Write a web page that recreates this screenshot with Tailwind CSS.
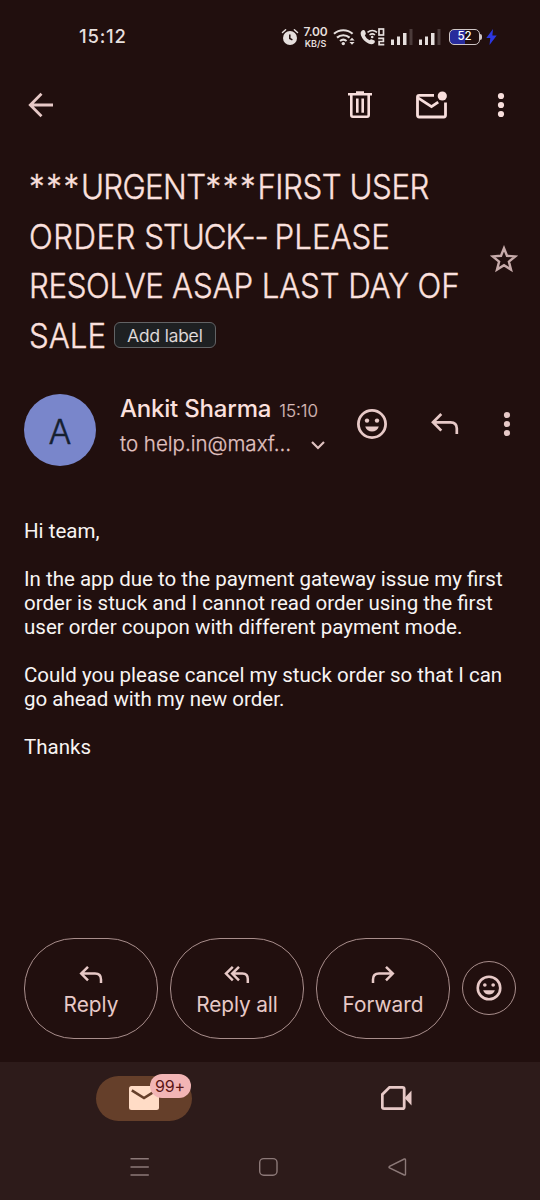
<!DOCTYPE html>
<html lang="en">
<head>
<meta charset="utf-8">
<title>Mail</title>
<script src="https://cdn.jsdelivr.net/npm/@tailwindcss/browser@4"></script>
</head>
<body class="bg-[#210f0e]">
<div class="flex h-[1200px] w-[540px] flex-col overflow-hidden bg-[#210f0e] font-['Inter',sans-serif] text-[#e7c9c7]">

  <!-- Status bar -->
  <header class="flex h-[72px] items-center pt-px pl-[79px] text-[#e6dfdd]">
    <span class="w-[202px] text-[18.5px] font-medium tracking-[0.8px]">15:12</span>
    <svg class="h-[18px] w-[18px]" viewBox="0 0 18 18" fill="none" stroke="currentColor"><circle cx="9" cy="10" r="7" fill="currentColor" stroke="none"/><path d="M1.5 4.5 4.6 1.8M16.5 4.5 13.4 1.8" stroke-width="1.5" stroke-linecap="round"/><path d="M8.8 6.5v4l2.6 1.4" stroke="#210f0e" stroke-width="1.5"/></svg>
    <div class="ml-[4px] flex h-[22px] w-[25px] flex-col items-center justify-between font-semibold">
      <span class="text-[12px] leading-[12px] tracking-[-0.2px]">7.00</span>
      <span class="text-[9px] leading-[9px]">KB/S</span>
    </div>
    <svg class="ml-[5px] h-[18px] w-[22px]" viewBox="0 0 22 18" fill="none" stroke="currentColor"><path d="M1 5.8a14 14 0 0 1 18.6 0M4 9.6a9.6 9.6 0 0 1 12.6 0M7 13a5.4 5.4 0 0 1 6.6 0" stroke-width="2.2"/><circle cx="10.3" cy="15.6" r="1.7" fill="currentColor" stroke="none"/><path d="M16.4 12.5 19 9.8l2.6 2.7zM16.4 14 19 16.7l2.6-2.7z" fill="currentColor" stroke="none"/></svg>
    <svg class="ml-[5px] h-[18px] w-[26px]" viewBox="0 0 26 18" fill="none" stroke="currentColor"><path d="M2 2.6C3 1.7 4.4 1.7 5 3l.8 2.3c.2.8-.2 1.3-1 2 1 2.3 2.4 3.8 4.9 5 .7-.9 1.3-1.2 2.100-.9l2.200.8c1.200.6 1.100 2 .1 3-1.300 1.300-3.300 1.500-5.600.3C5 13.700 2.300 10.800 1 7.400.3 5.300.7 3.700 2 2.600z" fill="currentColor" stroke="none"/><path d="M7.500 4.300a7.500 7.500 0 0 1 9.500 0M9.500 7a4.300 4.300 0 0 1 5.500 0" stroke-width="1.500"/><circle cx="12.200" cy="9" r="1.300" fill="currentColor" stroke="none"/><rect x="19" y="1" width="4.500" height="6" stroke-width="1.700"/><path d="M18.200 10.300h5.200v3.200h-4.300v3.200h5.200" stroke-width="1.700"/></svg>
    <svg class="ml-[5px] h-[16px] w-[22px]" viewBox="0 0 22 16" fill="currentColor"><rect x="0" y="10.500" width="3" height="5.500"/><rect x="6" y="7.500" width="3" height="8.500"/><rect x="12" y="4" width="3.500" height="12"/><rect x="18.500" y="0" width="3" height="16" fill="#4b3b3a"/></svg>
    <svg class="ml-[6px] h-[16px] w-[22px]" viewBox="0 0 22 16" fill="currentColor"><rect x="0" y="10.500" width="3" height="5.500"/><rect x="6" y="7.500" width="3" height="8.500"/><rect x="12" y="4" width="3.500" height="12"/><rect x="18.500" y="0" width="3" height="16" fill="#4b3b3a"/></svg>
    <div class="ml-[8px] flex h-[16px] w-[31px] items-center justify-center rounded-[5px] border border-[#cfc6c6] bg-linear-to-r from-[#272b9c] from-50% to-[#210f0e] to-50% text-[11.5px] leading-none font-medium text-white">52</div>
    <span class="h-[6px] w-[2px] rounded-r-sm bg-[#cfc6c6]"></span>
    <svg class="ml-[4px] h-[16px] w-[11px]" viewBox="0 0 11 16" fill="#2c37e0"><path d="M7 0 .3 9h4L3.500 16 10.700 6.500H6.400z"/></svg>
  </header>

  <!-- Toolbar -->
  <nav class="flex h-[66px] items-center pl-[28px] text-[#f8dedc]">
    <svg class="h-[26px] w-[26px] text-[#e7c9c7]" viewBox="0 0 26 26" fill="none" stroke="currentColor" stroke-width="2.800"><path d="M25 13H3M13.500 1.800 2.300 13l11.200 11.200"/></svg>
    <svg class="ml-[294px] h-[28px] w-[24px]" viewBox="0 0 24 28" fill="none" stroke="currentColor" stroke-width="2.600"><path d="M0 3.300h24M8 1.600h8"/><path d="M3.300 3.500v20.600q0 1.600 1.600 1.600h14.200q1.600 0 1.600-1.600V3.500M9.300 7.500v14.300M14.700 7.500v14.300"/></svg>
    <svg class="ml-[44px] h-[28px] w-[32px]" viewBox="0 0 32 28" fill="none" stroke="currentColor" stroke-width="2.800"><path d="M18 4.300H3.200Q1.500 4.300 1.500 6v18.300Q1.500 26 3.200 26h24.600q1.700 0 1.700-1.700V11.500"/><path d="m2 6.800 13.500 8.800 6.700-4.500"/><circle cx="26.300" cy="5" r="4.600" fill="currentColor" stroke="none"/></svg>
    <svg class="ml-[49px] h-[26px] w-[8px]" viewBox="0 0 8 26" fill="currentColor"><circle cx="4" cy="4" r="3.100"/><circle cx="4" cy="13" r="3.100"/><circle cx="4" cy="22" r="3.100"/></svg>
  </nav>

  <!-- Subject -->
  <section class="flex h-[242px] pt-[24px] pl-[29px]">
    <h1 class="w-[461px] text-[34px] leading-[49.5px] font-light whitespace-nowrap text-[#fbe0de] [-webkit-text-stroke:0.4px_#fbe0de]">
      <span class="block origin-left scale-x-[0.92]"><span class="tracking-[1.8px]">***</span><span class="tracking-[-0.7px]">URGENT</span><span class="tracking-[1.8px]">***</span><span class="tracking-[-0.5px]">FIRST USER</span></span>
      <span class="block origin-left scale-x-[0.92] [word-spacing:-1px]"><span class="tracking-[0.5px]">ORDER </span><span class="tracking-[-1.1px]">STUCK-- </span><span class="tracking-[0px]">PLEASE</span></span>
      <span class="block origin-left scale-x-[0.92] tracking-[-0.15px]"><span class="tracking-[-0.4px]">RESOLVE </span>ASAP LAST DAY OF</span>
      <span class="flex items-center"><span class="block w-[85px] origin-left scale-x-[0.92]">SALE</span><span class="flex h-[26px] w-[102px] items-center justify-center rounded-[6px] border-[1.5px] border-[#626365] bg-[#1e2022] text-[17.5px] leading-none tracking-[-0.1px] text-[#ebe3e2] [-webkit-text-stroke:0.2px_#ebe3e2]">Add label</span></span>
    </h1>
    <svg class="mt-[83px] h-[28px] w-[28px]" viewBox="0 0 28 28" fill="none" stroke="#c7abaa" stroke-width="2.400"><path d="m14 3.200 3 7.600 8.300.6-6.400 5.200 2.100 8L14 20.200l-7 4.400 2.100-8-6.400-5.200 8.300-.6z"/></svg>
  </section>

  <!-- Sender -->
  <section class="flex h-[139px] pt-[14px] pl-[24px]">
    <div class="flex h-[72px] w-[72px] items-center justify-center rounded-full bg-[#7986cb] pt-[3px] text-[34px] font-light text-[#152030] [-webkit-text-stroke:0.4px_#152030]">A</div>
    <div class="ml-[24px] w-[237px]">
      <div class="flex h-[30px] items-baseline text-[24px] leading-[30px]"><span class="font-medium tracking-[-0.2px] text-[#fbe0de]">Ankit Sharma</span><span class="ml-[8px] text-[17px] font-light text-[#d8bbb9] [-webkit-text-stroke:0.2px_#d8bbb9]">15:10</span></div>
      <div class="mt-[6px] flex h-[28px] items-center text-[20.5px] leading-[28px] font-light text-[#e0c2c0] [-webkit-text-stroke:0.25px_#e0c2c0]"><span class="w-[191px]">to help.in@maxf…</span><svg class="mt-[2px] h-[10px] w-[14px]" viewBox="0 0 14 10" fill="none" stroke="currentColor" stroke-width="2.200"><path d="m1 2 6 6 6-6"/></svg></div>
    </div>
    <svg class="mt-[15px] h-[30px] w-[30px]" viewBox="0 0 30 30" fill="currentColor"><circle cx="15" cy="15" r="13.600" fill="none" stroke="currentColor" stroke-width="2.800"/><circle cx="10" cy="11.600" r="2.200"/><circle cx="20" cy="11.600" r="2.200"/><path d="M8.200 17.500h13.600c-1 3.200-3.600 5-6.800 5s-5.800-1.800-6.800-5z"/></svg>
    <svg class="mt-[19px] ml-[44px] h-[24px] w-[28px]" viewBox="0 0 28 24" fill="none" stroke="currentColor" stroke-width="2.700"><path d="M10.300 1 2 9.300l8.300 8.300M2.500 9.300H19.500q6.300 0 6.300 6.300V21"/></svg>
    <svg class="mt-[17px] ml-[44px] h-[26px] w-[8px]" viewBox="0 0 8 26" fill="currentColor"><circle cx="4" cy="4" r="3.100"/><circle cx="4" cy="13" r="3.100"/><circle cx="4" cy="22" r="3.100"/></svg>
  </section>

  <!-- Message -->
  <article class="flex h-[419px] flex-col gap-6 pl-[24px] font-['Roboto',sans-serif] text-[20.5px] leading-[24px] whitespace-nowrap text-[#f8f4f3]">
    <p>Hi team,</p>
    <p>In the app due to the payment gateway issue my first<br>order is stuck and I cannot read order using the first<br>user order coupon with different payment mode.</p>
    <p>Could you please cancel my stuck order so that I can<br>go ahead with my new order.</p>
    <p>Thanks</p>
  </article>

  <!-- Actions -->
  <section class="flex h-[124px] items-start gap-[12px] pl-[24px] text-[20.8px] leading-[26px]">
    <button class="flex h-[101px] w-[134px] flex-col items-center rounded-[50px] border border-[#a98e8c] pt-[26px]"><svg class="h-[20px] w-[24px]" viewBox="0 0 24 20" fill="none" stroke="currentColor" stroke-width="2.500"><path d="M9 1.800 2.200 8.600 9 15.400M2.500 8.600H16q6 0 6 6V18"/></svg><span class="mt-[7px]">Reply</span></button>
    <button class="flex h-[101px] w-[134px] flex-col items-center rounded-[50px] border border-[#a98e8c] pt-[26px]"><svg class="h-[20px] w-[26px]" viewBox="0 0 26 20" fill="none" stroke="currentColor" stroke-width="2.500"><path d="M8.800 1.800 2 8.600l6.800 6.800M15 1.800 8.200 8.600l6.800 6.800M8.500 8.600h10q5.300 0 5.300 5.500V18"/></svg><span class="mt-[7px] tracking-[-0.1px]">Reply all</span></button>
    <button class="flex h-[101px] w-[134px] flex-col items-center rounded-[50px] border border-[#a98e8c] pt-[26px]"><svg class="h-[20px] w-[24px]" viewBox="0 0 24 20" fill="none" stroke="currentColor" stroke-width="2.500"><path d="m15 1.800 6.800 6.800-6.800 6.800M21.500 8.600H8q-6 0-6 6V18"/></svg><span class="mt-[7px]">Forward</span></button>
    <button class="mt-[23px] flex h-[54px] w-[54px] items-center justify-center rounded-full border border-[#a98e8c]"><svg class="h-[26px] w-[26px]" viewBox="0 0 30 30" fill="currentColor"><circle cx="15" cy="15" r="13" fill="none" stroke="currentColor" stroke-width="3"/><circle cx="10.200" cy="11.600" r="2.100"/><circle cx="19.800" cy="11.600" r="2.100"/><path d="M8.200 17.500h13.600c-1 3.200-3.600 5-6.800 5s-5.800-1.800-6.800-5z"/></svg></button>
  </section>

  <!-- Tabs and system navigation -->
  <footer class="h-[138px] bg-[#2d1b1a]">
    <div class="flex h-[72px] items-center">
      <div class="relative ml-[95.5px] flex h-[45px] w-[96px] items-center justify-center rounded-full bg-[#653f2a]">
        <svg class="h-[24px] w-[30px]" viewBox="0 0 30 24"><rect width="30" height="24" rx="2.500" fill="#ffdcc6"/><path d="m2.800 4.300 12.200 7.700 12.200-7.700" fill="none" stroke="#653f2a" stroke-width="2.600"/></svg>
        <span class="absolute top-[-2px] left-[54px] flex h-[24px] w-[41px] items-center justify-center rounded-full bg-[#f2b5b5] text-[16px] leading-none tracking-[-0.2px] text-[#5b1717]">99+</span>
      </div>
      <svg class="ml-[189.5px] h-[26px] w-[31px]" viewBox="0 0 31 26" fill="none" stroke="#e7c9c7" stroke-width="2.800"><path d="M8.500 2.300h13q1.700 0 1.700 1.700v18q0 1.700-1.700 1.700H3q-1.700 0-1.700-1.700V9.500z"/><path d="M23.500 13 30.500 5.500v15z" fill="#e7c9c7" stroke="none"/></svg>
    </div>
    <svg class="mt-[22px] ml-[130px] h-[20px] w-[278px]" viewBox="0 0 278 20" fill="none" stroke="#8c7978" stroke-width="1.400"><path d="M.5 2.800h18.300M.5 11h18.300M.5 19h18.300"/><rect x="129.700" y="2.600" width="17.300" height="16.600" rx="4"/><path d="M274.300 3q1.200-.5 1.200 1v14q0 1.500-1.200 1L259.500 12q-1-.8 0-1.600z"/></svg>
  </footer>
</div>
</body>
</html>
